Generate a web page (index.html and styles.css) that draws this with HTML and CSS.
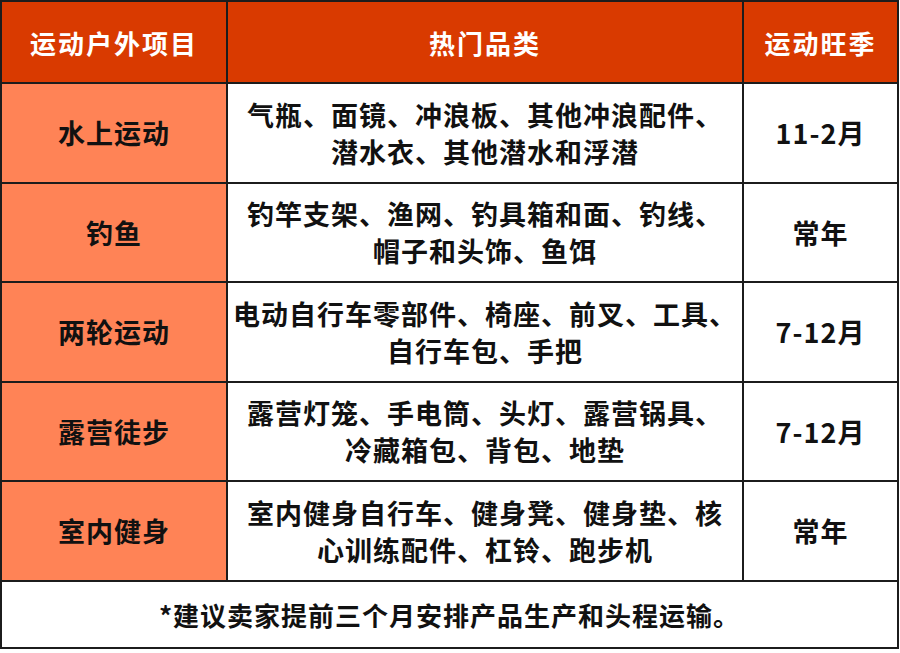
FILE: index.html
```html
<!DOCTYPE html>
<html lang="zh-CN">
<head>
<meta charset="utf-8">
<title>运动户外项目</title>
<link rel="stylesheet" href="styles.css">
</head>
<body>
<div class="table">
  <div class="cell head">运动户外项目</div>
  <div class="cell head">热门品类</div>
  <div class="cell head">运动旺季</div>

  <div class="cell cat">水上运动</div>
  <div class="cell items">气瓶、面镜、冲浪板、其他冲浪配件、<br>潜水衣、其他潜水和浮潜</div>
  <div class="cell season">11-2月</div>

  <div class="cell cat">钓鱼</div>
  <div class="cell items">钓竿支架、渔网、钓具箱和面、钓线、<br>帽子和头饰、鱼饵</div>
  <div class="cell season">常年</div>

  <div class="cell cat">两轮运动</div>
  <div class="cell items">电动自行车零部件、椅座、前叉、工具、<br>自行车包、手把</div>
  <div class="cell season">7-12月</div>

  <div class="cell cat">露营徒步</div>
  <div class="cell items">露营灯笼、手电筒、头灯、露营锅具、<br>冷藏箱包、背包、地垫</div>
  <div class="cell season">7-12月</div>

  <div class="cell cat">室内健身</div>
  <div class="cell items">室内健身自行车、健身凳、健身垫、核<br>心训练配件、杠铃、跑步机</div>
  <div class="cell season">常年</div>

  <div class="cell note">*建议卖家提前三个月安排产品生产和头程运输。</div>
</div>
</body>
</html>
```

FILE: styles.css
```css
html, body {
  margin: 0;
  padding: 0;
  background: #ffffff;
}

body {
  font-family: "Noto Sans CJK SC", "Noto Sans", sans-serif;
  font-weight: 700;
  color: #111111;
}

.table {
  width: 899px;
  box-sizing: border-box;
  padding: 2px;
  background: #1c1c1c;
  display: grid;
  grid-template-columns: 224px 514px 153px;
  grid-template-rows: 80px repeat(5, 97.5px) 65px;
  gap: 2px;
}

.cell {
  display: flex;
  align-items: center;
  justify-content: center;
  text-align: center;
  font-size: 27px;
  line-height: 37px;
  letter-spacing: 1px;
  background: #ffffff;
}

.head {
  background: #d93a00;
  color: #ffffff;
  font-size: 26px;
  letter-spacing: 2px;
}

.cat {
  background: #ff8356;
}

.note {
  grid-column: 1 / 4;
  font-size: 26px;
  letter-spacing: 1px;
}
```
